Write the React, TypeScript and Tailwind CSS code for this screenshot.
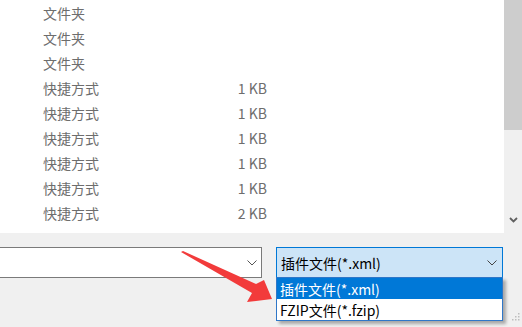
import React from 'react'

const rows = [
  { type: '文件夹', size: '' },
  { type: '文件夹', size: '' },
  { type: '文件夹', size: '' },
  { type: '快捷方式', size: '1 KB' },
  { type: '快捷方式', size: '1 KB' },
  { type: '快捷方式', size: '1 KB' },
  { type: '快捷方式', size: '1 KB' },
  { type: '快捷方式', size: '1 KB' },
  { type: '快捷方式', size: '2 KB' },
]

function Chevron({ className }: { className?: string }) {
  return (
    <svg width="10" height="6" viewBox="0 0 10 6" className={className}>
      <polyline points="0.5,0.5 5,5 9.5,0.5" fill="none" stroke="currentColor" strokeWidth="1" />
    </svg>
  )
}

export default function App() {
  return (
    <div
      className="relative w-[522px] h-[327px] overflow-hidden bg-[#f0f0f0] text-[14px]"
      style={{ fontFamily: '"Noto Sans CJK SC", "Noto Sans", sans-serif' }}
    >
      {/* file list */}
      <div className="flex h-[233px]">
        <div className="flex-1 bg-white">
          {rows.map((r, i) => (
            <div key={i} className="flex h-[25px] items-center text-[#6d6d6d] leading-none">
              <span className="ml-[43px] w-[161px]">{r.type}</span>
              <span className="w-[63px] text-right">{r.size}</span>
            </div>
          ))}
        </div>
        <div className="w-[18px] flex flex-col bg-[#f0f0f0]">
          <div className="h-[130px] bg-[#cdcdcd]" />
          <div className="flex-1" />
          <div className="h-[16px] flex items-start justify-center text-[#606060]">
            <svg width="9" height="6" viewBox="0 0 9 6">
              <polyline points="1,1 4.5,4.5 8,1" fill="none" stroke="currentColor" strokeWidth="1.8" />
            </svg>
          </div>
        </div>
      </div>

      {/* bottom bar */}
      <div className="flex items-start pt-[14px]">
        <div className="-ml-px w-[263px] h-[31px] bg-white border border-[#7a7a7a] flex items-center justify-end pr-[4px] text-[#555]">
          <Chevron />
        </div>
        <div className="relative ml-[14px]">
          <div className="w-[227px] h-[31px] bg-[#cce4f7] border border-[#0078d7] flex items-center justify-between pl-[4px] pr-[5px] text-black leading-none">
            <span>插件文件(*.xml)</span>
            <Chevron className="text-[#444]" />
          </div>
          <div className="absolute left-0 top-[30px] w-[227px] bg-white border border-[#2f77c8] shadow-[3px_3px_3px_rgba(0,0,0,0.3)] leading-none">
            <div className="h-[21px] bg-[#0078d7] text-white flex items-center pl-[3px]">插件文件(*.xml)</div>
            <div className="h-[21px] text-black flex items-center pl-[3px]">FZIP文件(*.fzip)</div>
          </div>
        </div>
      </div>

      {/* resize grip */}
      <svg className="absolute right-[2px] bottom-[6px]" width="8" height="8" viewBox="0 0 8 8">
        <rect x="6" y="0" width="1.5" height="1.5" fill="#bdbdbd" />
        <rect x="3" y="3" width="1.5" height="1.5" fill="#bdbdbd" />
        <rect x="6" y="3" width="1.5" height="1.5" fill="#bdbdbd" />
        <rect x="0" y="6" width="1.5" height="1.5" fill="#bdbdbd" />
        <rect x="3" y="6" width="1.5" height="1.5" fill="#bdbdbd" />
        <rect x="6" y="6" width="1.5" height="1.5" fill="#bdbdbd" />
      </svg>

      {/* red arrow annotation */}
      <svg className="absolute left-0 top-0 pointer-events-none" width="522" height="327" viewBox="0 0 522 327">
        <polygon
          points="181,252 183,251 256,284 264,280 272,299 247,302 252,293"
          fill="#f23b3b"
        />
      </svg>
    </div>
  )
}
